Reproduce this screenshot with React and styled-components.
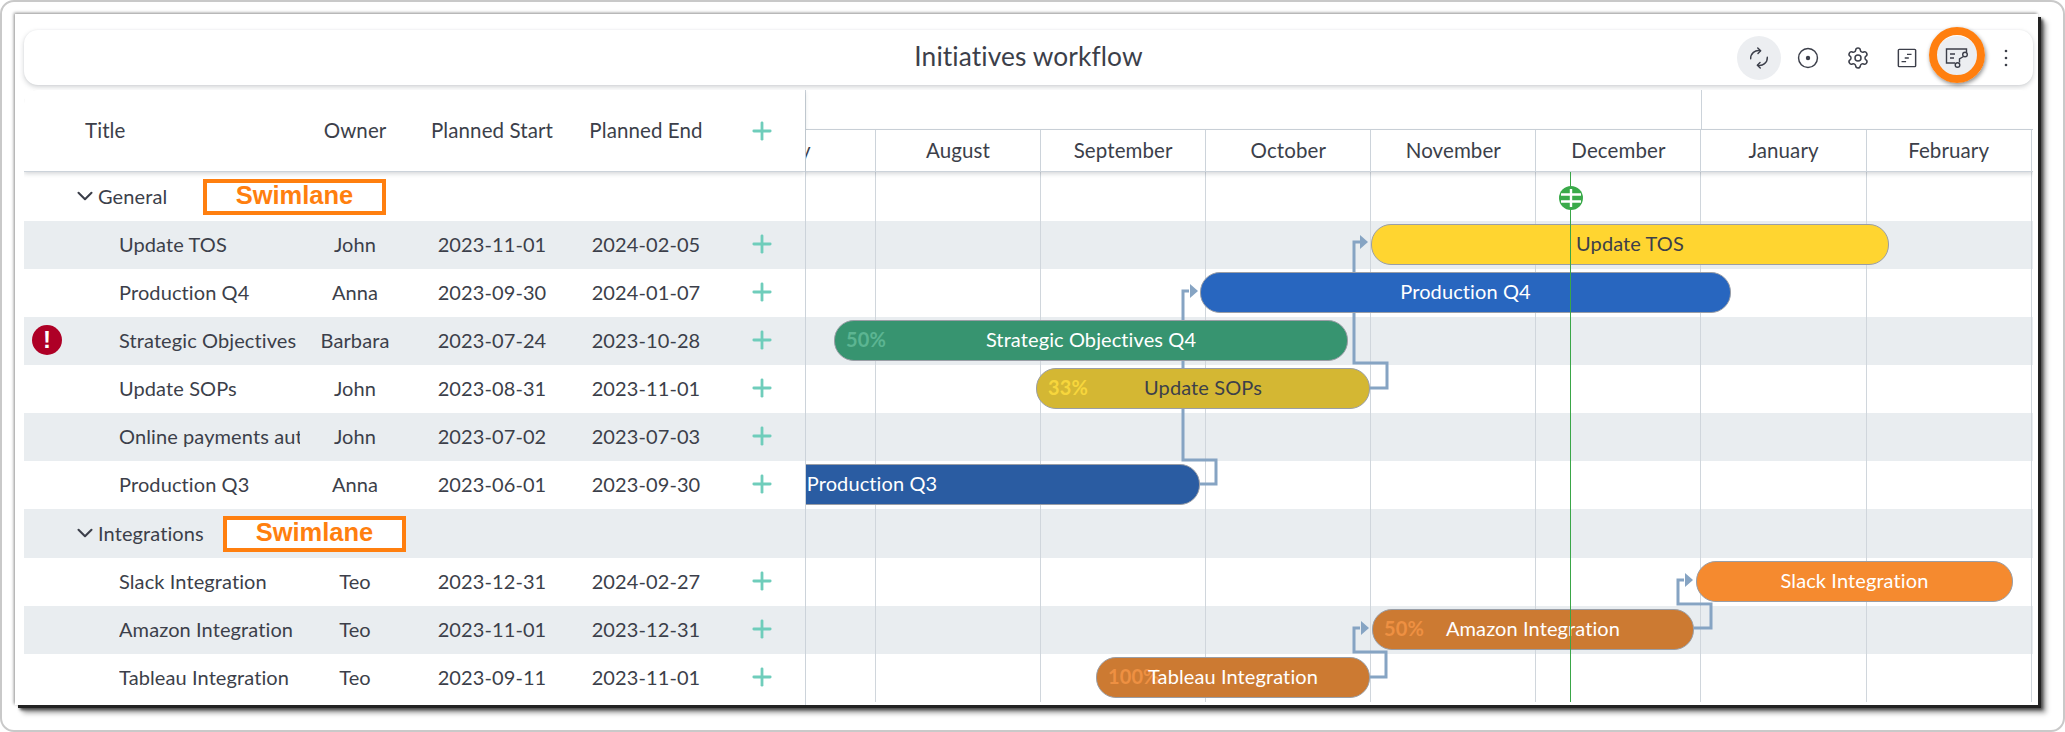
import React from 'react';
import styled, { createGlobalStyle } from 'styled-components';
import { Plus, ChevronDown, Settings } from 'lucide-react';

const MONTH_WIDTH = 165.1;
const MONTH_OFFSET = -95.1;
const GANTT_LEFT = 806;
const COLUMNS = '280px 102px 172px 136px 91px';

const months = ['July', 'August', 'September', 'October', 'November', 'December', 'January', 'February'];

const rows = [
    { lane: true, title: 'General', boxLeft: 179 },
    { title: 'Update TOS', owner: 'John', start: '2023-11-01', end: '2024-02-05', bar: { from: 1371, to: 1889, color: '#ffd530', label: 'Update TOS', dark: true } },
    { title: 'Production Q4', owner: 'Anna', start: '2023-09-30', end: '2024-01-07', bar: { from: 1200, to: 1731, color: '#2866bf', label: 'Production Q4' } },
    { title: 'Strategic Objectives Q4', owner: 'Barbara', start: '2023-07-24', end: '2023-10-28', error: true, bar: { from: 834, to: 1348, color: '#379470', label: 'Strategic Objectives Q4', percent: '50%', percentColor: '#5cb592' } },
    { title: 'Update SOPs', owner: 'John', start: '2023-08-31', end: '2023-11-01', bar: { from: 1036, to: 1370, color: '#d4b733', label: 'Update SOPs', percent: '33%', percentColor: '#f7d63c', dark: true } },
    { title: 'Online payments automation', owner: 'John', start: '2023-07-02', end: '2023-07-03' },
    { title: 'Production Q3', owner: 'Anna', start: '2023-06-01', end: '2023-09-30', bar: { from: 544, to: 1200, color: '#2a5ca2', label: 'Production Q3' } },
    { lane: true, title: 'Integrations', boxLeft: 199 },
    { title: 'Slack Integration', owner: 'Teo', start: '2023-12-31', end: '2024-02-27', bar: { from: 1696, to: 2013, color: '#f58a2f', label: 'Slack Integration' } },
    { title: 'Amazon Integration', owner: 'Teo', start: '2023-11-01', end: '2023-12-31', bar: { from: 1372, to: 1694, color: '#cc7a32', label: 'Amazon Integration', percent: '50%', percentColor: '#ee9042' } },
    { title: 'Tableau Integration', owner: 'Teo', start: '2023-09-11', end: '2023-11-01', bar: { from: 1096, to: 1370, color: '#cc7a32', label: 'Tableau Integration', percent: '100%', percentColor: '#ee9042' } },
];

// dependency lines in page coordinates
const links = [
    { d: 'M1370 388H1387V363H1354V242H1360', tipX: 1368, tipY: 242 },
    { d: 'M1200 484H1216V460H1183V291H1189', tipX: 1198, tipY: 291 },
    { d: 'M1694 628H1711V604H1678V580H1684', tipX: 1693, tipY: 580 },
    { d: 'M1370 677H1386V652H1354V628H1360', tipX: 1369, tipY: 628 },
];

const GlobalStyle = createGlobalStyle`
    html, body {
        margin: 0;
        background: #fff;
    }
    body {
        font-family: 'Lato', 'Noto Sans', sans-serif;
        font-size: 20px;
        letter-spacing: 0.1px;
        color: #3c3f4a;
    }
`;

const Page = styled.div`
    box-sizing: border-box;
    width: 2065px;
    height: 732px;
    padding: 12px 25px 25px 13px;
    border: 2px solid #c9c9c9;
    border-radius: 14px;
    background: #fff;
    overflow: hidden;
`;

const Frame = styled.div`
    box-sizing: border-box;
    width: 2023px;
    height: 691px;
    padding: 16px 5px 0 9px;
    background: #fff;
    box-shadow: 3px 3px 0 #222, 5px 5px 3px #444, 8px 8px 5px rgba(0, 0, 0, 0.35), -1px -1px 3px rgba(0, 0, 0, 0.45);
`;

const TopBar = styled.header`
    position: relative;
    display: flex;
    align-items: center;
    justify-content: flex-end;
    height: 55px;
    padding-right: 5px;
    border-radius: 14px;
    background: #fff;
    box-shadow: 0 2px 5px rgba(40, 50, 60, 0.22), 0 0 2px rgba(40, 50, 60, 0.06);
`;

const Heading = styled.h1`
    position: absolute;
    left: 0;
    right: 0;
    margin: 0 0 3px;
    font-size: 26.3px;
    font-weight: 400;
    text-align: center;
    color: #3c3f4a;
`;

const Tools = styled.div`
    display: flex;
    align-items: center;
    gap: 5.4px;
`;

const ToolButton = styled.div`
    display: flex;
    align-items: center;
    justify-content: center;
    width: 44px;
    height: 44px;
    border-radius: 50%;
    background: ${({ $active }) => ($active ? '#eceef1' : 'transparent')};
    color: #3c3f4a;
`;

const Ring = styled.div`
    position: absolute;
    top: -3px;
    left: 1905px;
    box-sizing: border-box;
    width: 56px;
    height: 56px;
    border: 8px solid #ff7f0f;
    border-radius: 50%;
    box-shadow: 1px 2px 4px rgba(0, 0, 0, 0.45);
`;

const Body = styled.div`
    display: grid;
    grid-template-columns: 781px 1fr;
    margin-top: 5px;
    height: 615px;
    border-radius: 14px 14px 0 0;
    overflow: hidden;
`;

const TableHead = styled.div`
    display: grid;
    grid-template-columns: ${COLUMNS};
    align-items: center;
    height: 82px;
    border-bottom: 1px solid #ccd3da;
    box-sizing: border-box;
    box-shadow: 0 2px 4px rgba(40, 50, 60, 0.18);
    position: relative;
    z-index: 2;
    background: #fff;
`;

const HeadCell = styled.div`
    margin-bottom: 2px;
    font-size: 20.5px;
    white-space: nowrap;
    text-align: ${({ $left }) => ($left ? 'left' : 'center')};
    padding-left: ${({ $left }) => ($left ? '61px' : '0')};
`;

const Row = styled.div`
    position: relative;
    box-sizing: border-box;
    height: ${({ $lane }) => ($lane ? '48.5px' : '48.1px')};
    background: ${({ $odd }) => ($odd ? '#e9edf0' : '#fff')};
`;

const TableRow = styled(Row)`
    display: grid;
    grid-template-columns: ${COLUMNS};
    align-items: center;
    padding-bottom: 2px;
`;

const LaneRow = styled(Row)`
    display: flex;
    align-items: center;
    padding-left: 48px;
`;

const SwimlaneBox = styled.div`
    position: absolute;
    top: 7px;
    left: ${({ $left }) => $left}px;
    box-sizing: border-box;
    width: 183px;
    height: 36px;
    border: 4px solid #ff7f0f;
    background: #fff;
    font-family: 'Liberation Sans', Arial, sans-serif;
    font-size: 25.5px;
    font-weight: 700;
    letter-spacing: 0;
    line-height: 25px;
    text-align: center;
    color: #ff7f0f;
`;

const TitleCell = styled.div`
    width: 181px;
    margin-left: 95px;
    white-space: nowrap;
    overflow: hidden;
`;

const Cell = styled.div`
    text-align: center;
    white-space: nowrap;
`;

const ErrorBadge = styled.div`
    position: absolute;
    top: 8px;
    left: 8px;
    width: 30px;
    height: 30px;
    border-radius: 50%;
    background: #ae0026;
    color: #fff;
    font-family: 'Liberation Sans', Arial, sans-serif;
    font-size: 24px;
    font-weight: 700;
    line-height: 30px;
    text-align: center;
`;

const PlusCell = styled.div`
    display: flex;
    justify-content: center;
    padding-left: 5px;
    color: #6fcdbb;
`;

const Gantt = styled.div`
    position: relative;
    overflow: hidden;
    border-left: 1px solid #ccd3da;
    box-sizing: border-box;
`;

const YearRow = styled.div`
    display: flex;
    height: 40px;
    box-sizing: border-box;
    border-bottom: 1px solid #ccd3da;
    background: #fff;
`;

const YearCell = styled.div`
    width: ${({ $width }) => $width}px;
    border-right: 1px solid #ccd3da;
    box-sizing: border-box;
`;

const MonthRow = styled.div`
    position: relative;
    z-index: 2;
    display: flex;
    height: 42px;
    margin-left: ${MONTH_OFFSET}px;
    background: #fff;
    box-sizing: border-box;
    border-bottom: 1px solid #ccd3da;
    box-shadow: 0 2px 4px rgba(40, 50, 60, 0.18);
`;

const Month = styled.div`
    flex: 0 0 ${MONTH_WIDTH}px;
    box-sizing: border-box;
    border-right: 1px solid #ccd3da;
    font-size: 20.5px;
    line-height: 41px;
    text-align: center;
`;

const Canvas = styled.div`
    position: relative;
    height: 533px;
`;

const GridLines = styled.div`
    position: absolute;
    top: 0;
    left: ${MONTH_OFFSET}px;
    bottom: 3px;
    display: flex;
    pointer-events: none;
`;

const GridLine = styled.div`
    flex: 0 0 ${MONTH_WIDTH}px;
    box-sizing: border-box;
    border-right: 1px solid #d0d6dc;
`;

const Links = styled.svg`
    position: absolute;
    top: 0;
    left: 0;
    width: 100%;
    height: 100%;
`;

const Bar = styled.div`
    position: absolute;
    top: 3px;
    z-index: 1;
    display: flex;
    align-items: center;
    justify-content: center;
    box-sizing: border-box;
    height: 41px;
    padding-bottom: 2px;
    border: 1px solid #9a9ea6;
    border-radius: 20px;
    background: ${({ $color }) => $color};
    color: ${({ $dark }) => ($dark ? '#3c3f4a' : '#fff')};
    white-space: nowrap;
`;

const Percent = styled.span`
    position: absolute;
    left: 11px;
    color: ${({ $color }) => $color};
    font-weight: 700;
`;

const BarLabel = styled.span`
    position: relative;
`;

const TodayLine = styled.div`
    position: absolute;
    z-index: 3;
    top: 0;
    bottom: 3px;
    left: ${1570 - GANTT_LEFT}px;
    width: 1px;
    background: #3aa648;
`;

const TodayMarker = styled.svg`
    position: absolute;
    z-index: 3;
    top: 13px;
    left: ${1570 - GANTT_LEFT - 12.5}px;
`;

const SyncIcon = () => (
    <svg width="20" height="22" viewBox="0 0 24 26" fill="none" stroke="currentColor" strokeWidth="1.7" strokeLinecap="round" strokeLinejoin="round">
        <path d="M2 14A9.5 9.5 0 0 1 13.5 4.2" />
        <path d="M10.5 1 14 4.3 10.8 7.5" />
        <path d="M22 12A9.5 9.5 0 0 1 10.5 21.8" />
        <path d="M13.5 25 10 21.7 13.2 18.5" />
    </svg>
);

const TargetIcon = () => (
    <svg width="22" height="22" viewBox="0 0 24 24" fill="none" stroke="currentColor" strokeWidth="1.6">
        <circle cx="12" cy="12" r="10.3" />
        <circle cx="12" cy="12" r="2.4" fill="currentColor" stroke="none" />
    </svg>
);

const PlanIcon = () => (
    <svg width="20" height="20" viewBox="0 0 22 22" fill="none" stroke="currentColor" strokeWidth="1.6">
        <rect x="1.5" y="1.5" width="19" height="19" rx="1" />
        <path d="M11 7H16M8.5 11H13M5 15H10" />
    </svg>
);

const FlowIcon = () => (
    <svg width="24" height="22" viewBox="0 0 24 22" fill="none" stroke="currentColor" strokeWidth="1.4">
        <path d="M10 16H1.5V2H21.5V5" />
        <path d="M5 7H10M5 11H9" />
        <path d="M18.5 9.5 14.5 12V15.5" />
        <circle cx="20" cy="7.5" r="2.3" />
        <circle cx="12.5" cy="18" r="2.3" />
    </svg>
);

const KebabIcon = () => (
    <svg width="4" height="18" viewBox="0 0 4 18" fill="currentColor">
        <circle cx="2" cy="2" r="1.3" />
        <circle cx="2" cy="9" r="1.3" />
        <circle cx="2" cy="16" r="1.3" />
    </svg>
);

const TableRows = () =>
    rows.map((row, index) => {
        const odd = index % 2 === 1;
        if (row.lane) {
            return (
                <LaneRow key={row.title} $lane $odd={odd}>
                    <ChevronDown size={26} strokeWidth={1.9} />
                    {row.title}
                    <SwimlaneBox $left={row.boxLeft}>Swimlane</SwimlaneBox>
                </LaneRow>
            );
        }
        return (
            <TableRow key={row.title} $odd={odd}>
                {row.error && <ErrorBadge>!</ErrorBadge>}
                <TitleCell>{row.title}</TitleCell>
                <Cell>{row.owner}</Cell>
                <Cell>{row.start}</Cell>
                <Cell>{row.end}</Cell>
                <PlusCell>
                    <Plus size={28} strokeWidth={2.4} />
                </PlusCell>
            </TableRow>
        );
    });

const GanttRows = () =>
    rows.map((row, index) => (
        <Row key={row.title} $lane={row.lane} $odd={index % 2 === 1}>
            {row.bar && (
                <Bar
                    $color={row.bar.color}
                    $dark={row.bar.dark}
                    style={{ left: row.bar.from - GANTT_LEFT, width: row.bar.to - row.bar.from }}
                >
                    {row.bar.percent && <Percent $color={row.bar.percentColor}>{row.bar.percent}</Percent>}
                    <BarLabel>{row.bar.label}</BarLabel>
                </Bar>
            )}
        </Row>
    ));

const App = () => (
    <>
        <GlobalStyle />
        <Page>
            <Frame>
                <TopBar>
                    <Heading>Initiatives workflow</Heading>
                    <Tools>
                        <ToolButton $active>
                            <SyncIcon />
                        </ToolButton>
                        <ToolButton>
                            <TargetIcon />
                        </ToolButton>
                        <ToolButton>
                            <Settings size={24} strokeWidth={1.5} />
                        </ToolButton>
                        <ToolButton>
                            <PlanIcon />
                        </ToolButton>
                        <ToolButton $active>
                            <FlowIcon />
                        </ToolButton>
                        <ToolButton>
                            <KebabIcon />
                        </ToolButton>
                    </Tools>
                    <Ring />
                </TopBar>
                <Body>
                    <div>
                        <TableHead>
                            <HeadCell $left>Title</HeadCell>
                            <HeadCell>Owner</HeadCell>
                            <HeadCell>Planned Start</HeadCell>
                            <HeadCell>Planned End</HeadCell>
                            <PlusCell>
                                <Plus size={28} strokeWidth={2.4} />
                            </PlusCell>
                        </TableHead>
                        <TableRows />
                    </div>
                    <Gantt>
                        <YearRow>
                            <YearCell $width={896} />
                        </YearRow>
                        <MonthRow>
                            {months.map((month) => (
                                <Month key={month}>{month}</Month>
                            ))}
                        </MonthRow>
                        <Canvas>
                            <GanttRows />
                            <GridLines>
                                {months.map((month) => (
                                    <GridLine key={month} />
                                ))}
                            </GridLines>
                            <Links viewBox={`${GANTT_LEFT} 172 1227 533`}>
                                {links.map((link) => (
                                    <g key={link.d}>
                                        <path d={link.d} fill="none" stroke="#86a4c3" strokeWidth="3" />
                                        <path
                                            d={`M${link.tipX} ${link.tipY}L${link.tipX - 8} ${link.tipY - 7}V${link.tipY + 7}Z`}
                                            fill="#86a4c3"
                                        />
                                    </g>
                                ))}
                            </Links>
                            <TodayLine />
                            <TodayMarker width="26" height="26" viewBox="0 0 26 26">
                                <circle cx="13" cy="13" r="12" fill="#3aaa4a" />
                                <path d="M3 9.5H23M3 16.5H23M13 4V22" stroke="#fff" strokeWidth="2.4" fill="none" />
                            </TodayMarker>
                        </Canvas>
                    </Gantt>
                </Body>
            </Frame>
        </Page>
    </>
);

export default App;
